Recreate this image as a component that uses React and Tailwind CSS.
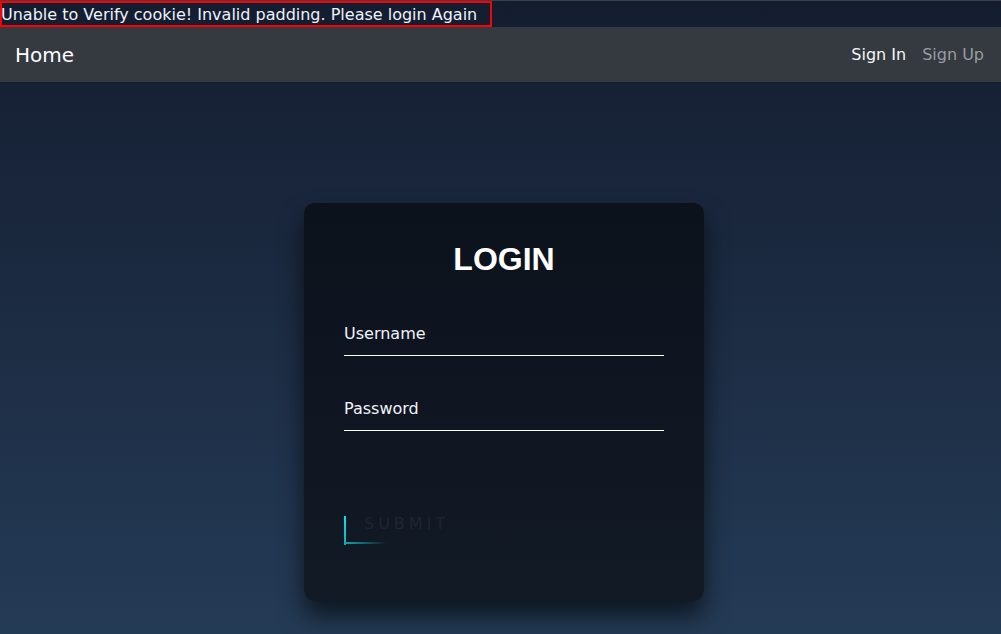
export default function App() {
  const dv = "font-['DejaVu_Sans',sans-serif]";
  return (
    <div className={`h-[634px] w-full overflow-hidden bg-gradient-to-b from-[#141d30] to-[#243b56] ${dv}`}>
      <div className="h-px bg-[#3b404a]" />
      <div className="h-[26px]">
        <div className="h-[26px] w-[492px] border-2 border-[#ff0000] pt-[2px] text-[16px] leading-[20px] text-[#eef2fa] whitespace-nowrap">
          <span className="ml-[-1px]">Unable to Verify cookie! Invalid padding. Please login Again</span>
        </div>
      </div>
      <nav className="flex h-[55px] items-center justify-between bg-[#343a40] pl-4 pr-[17px]">
        <span className="ml-[-1px] text-[20px] text-white">Home</span>
        <div className="flex items-center gap-4 text-[16px]">
          <span className="text-[#f5f6f7]">Sign In</span>
          <span className="text-[#9a9da1]">Sign Up</span>
        </div>
      </nav>
      <main className="flex justify-center pl-[7px] pt-[121px]">
        <div className="flex h-[398px] w-[400px] flex-col rounded-[10px] bg-gradient-to-b from-[#0c121c] to-[#121a26] px-10 pt-10 shadow-[0_15px_25px_rgba(0,0,0,0.6)]">
          <h2 className="mb-10 text-center font-['Liberation_Sans',Arial,sans-serif] text-[32px] font-bold leading-[32px] text-white">
            LOGIN
          </h2>
          <div className="flex h-[41px] flex-col border-b border-white pt-[9px]">
            <span className="text-[16px] leading-[19px] text-[#f0f3f8]">Username</span>
          </div>
          <div className="mt-[34px] flex h-[41px] flex-col border-b border-white pt-[9px]">
            <span className="text-[16px] leading-[19px] text-[#f0f3f8]">Password</span>
          </div>
          <div className="mt-[73px] flex">
            <div className="relative h-[39px] px-5 py-[10px] text-[16px] leading-[19px] tracking-[4px] text-[#1d2631]">
              SUBMIT
              <span className="absolute left-0 top-[12px] h-[29px] w-[2px] bg-gradient-to-t from-[#14a9b4] to-[#06e6f2]" />
              <span className="absolute bottom-[-1px] left-0 h-[2px] w-[42px] bg-gradient-to-r from-[#11aab5] to-transparent" />
            </div>
          </div>
        </div>
      </main>
    </div>
  );
}
